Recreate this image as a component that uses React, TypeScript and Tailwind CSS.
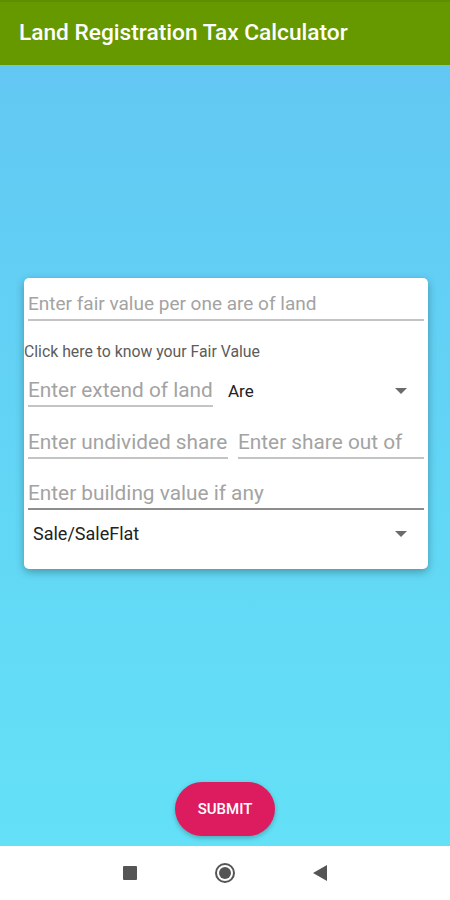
const font = { fontFamily: "Roboto, 'Noto Sans', sans-serif" };

function Caret() {
  return (
    <svg width="12" height="6" viewBox="0 0 12 6" className="shrink-0">
      <path d="M0 0 L12 0 L6 6 Z" fill="#6b6b6b" />
    </svg>
  );
}

function Field({
  label,
  className = "",
  line = "border-[#c4c4c4]",
  size = "text-[20.8px]",
}: {
  label: string;
  className?: string;
  line?: string;
  size?: string;
}) {
  return (
    <div className={`border-b-2 ${line} pb-[3px] ${size} leading-[24px] text-[#a3a3a3] whitespace-nowrap ${className}`}>
      {label}
    </div>
  );
}

export default function App() {
  return (
    <div className="w-[450px] h-[900px] flex flex-col overflow-hidden" style={font}>
      {/* App bar */}
      <div className="h-[65px] bg-[#669900] border-t-2 border-[#5e8f00] flex items-center px-[19px] shrink-0">
        <h1 className="text-white text-[22.7px] font-medium">Land Registration Tax Calculator</h1>
      </div>

      {/* Body */}
      <div className="flex-1 bg-gradient-to-b from-[#62c8f3] to-[#63e1f7] flex flex-col items-center">
        <div className="mt-[213px] w-[404px] ml-[2px] bg-white rounded-[5px] shadow-[0_3px_8px_rgba(0,0,0,0.3)] pt-[14px] pb-[23px] px-[4px]">
          <Field label="Enter fair value per one are of land" size="text-[19px]" />
          <p className="mt-[23px] ml-[-4px] text-[15.8px] text-[#5c5c5c] leading-[16px] whitespace-nowrap">
            Click here to know your Fair Value
          </p>

          <div className="mt-[18px] flex items-center">
            <Field label="Enter extend of land" className="w-[185px]" />
            <div className="flex-1 flex items-center justify-between pl-[15px] pr-[17px] pb-[4px]">
              <span className="text-[17px] leading-[24px] text-[#222]">Are</span>
              <Caret />
            </div>
          </div>

          <div className="mt-[23px] flex gap-[10px]">
            <Field label="Enter undivided share" className="w-[200px]" />
            <Field label="Enter share out of" className="flex-1" />
          </div>

          <Field label="Enter building value if any" className="mt-[22px]" line="border-[#8d8d8d]" />

          <div className="mt-[12px] flex items-center justify-between pl-[5px] pr-[17px]">
            <span className="text-[18px] leading-[24px] text-[#222]">Sale/SaleFlat</span>
            <Caret />
          </div>
        </div>

        <div className="flex-1" />
        <button className="mb-[10px] w-[100px] h-[54px] rounded-full bg-[#dc1c5e] text-white text-[15px] font-medium shadow-[0_2px_5px_rgba(0,0,0,0.25)]">
          SUBMIT
        </button>
      </div>

      {/* Nav bar */}
      <div className="h-[54px] bg-white flex items-center justify-center gap-[78px] shrink-0">
        <div className="w-[14px] h-[14px] bg-[#555] rounded-[1px]" />
        <div className="w-[20px] h-[20px] rounded-full border-2 border-[#555] flex items-center justify-center">
          <div className="w-[12px] h-[12px] rounded-full bg-[#555]" />
        </div>
        <svg width="14" height="16" viewBox="0 0 14 16">
          <path d="M14 0 L14 16 L0 8 Z" fill="#555" />
        </svg>
      </div>
    </div>
  );
}
